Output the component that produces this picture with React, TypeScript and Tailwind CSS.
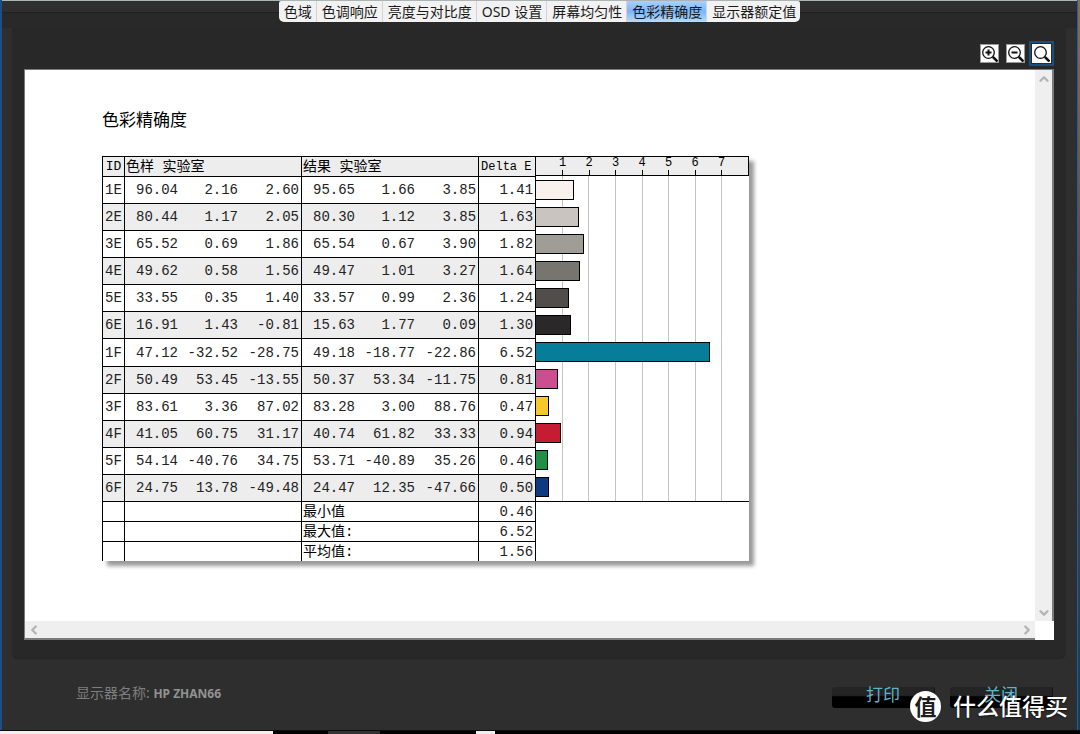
import { ChevronDown, ChevronLeft, ChevronRight, ChevronUp } from "lucide-react";
import clsx from "clsx";

type Sample = {
  id: string;
  target: string[];
  result: string[];
  deltaE: number;
  color: string;
};

const tabs = [
  "色域",
  "色调响应",
  "亮度与对比度",
  "OSD 设置",
  "屏幕均匀性",
  "色彩精确度",
  "显示器额定值",
];

const samples: Sample[] = [
  { id: "1E", target: ["96.04", "2.16", "2.60"], result: ["95.65", "1.66", "3.85"], deltaE: 1.41, color: "#f9f1ed" },
  { id: "2E", target: ["80.44", "1.17", "2.05"], result: ["80.30", "1.12", "3.85"], deltaE: 1.63, color: "#c9c4bf" },
  { id: "3E", target: ["65.52", "0.69", "1.86"], result: ["65.54", "0.67", "3.90"], deltaE: 1.82, color: "#a09d97" },
  { id: "4E", target: ["49.62", "0.58", "1.56"], result: ["49.47", "1.01", "3.27"], deltaE: 1.64, color: "#777570" },
  { id: "5E", target: ["33.55", "0.35", "1.40"], result: ["33.57", "0.99", "2.36"], deltaE: 1.24, color: "#504d4b" },
  { id: "6E", target: ["16.91", "1.43", "-0.81"], result: ["15.63", "1.77", "0.09"], deltaE: 1.3, color: "#2a2829" },
  { id: "1F", target: ["47.12", "-32.52", "-28.75"], result: ["49.18", "-18.77", "-22.86"], deltaE: 6.52, color: "#067e9a" },
  { id: "2F", target: ["50.49", "53.45", "-13.55"], result: ["50.37", "53.34", "-11.75"], deltaE: 0.81, color: "#cb4f8e" },
  { id: "3F", target: ["83.61", "3.36", "87.02"], result: ["83.28", "3.00", "88.76"], deltaE: 0.47, color: "#f6c92b" },
  { id: "4F", target: ["41.05", "60.75", "31.17"], result: ["40.74", "61.82", "33.33"], deltaE: 0.94, color: "#c61c33" },
  { id: "5F", target: ["54.14", "-40.76", "34.75"], result: ["53.71", "-40.89", "35.26"], deltaE: 0.46, color: "#228f47" },
  { id: "6F", target: ["24.75", "13.78", "-49.48"], result: ["24.47", "12.35", "-47.66"], deltaE: 0.5, color: "#0f3a82" },
];

const summary = [
  { label: "最小值", value: "0.46" },
  { label: "最大值:", value: "6.52" },
  { label: "平均值:", value: "1.56" },
];

const ticks = [1, 2, 3, 4, 5, 6, 7];
const SCALE_MAX = 8;

const ZoomIcon = ({ sign }: { sign?: "+" | "-" }) => (
  <svg viewBox="0 0 17 17" className="size-[17px]" fill="none" stroke="#111">
    <circle cx="7.5" cy="7.5" r="5.8" strokeWidth="1.3" />
    <path d="M11.8 11.8 L16.5 16.5" strokeWidth="2.6" />
    {sign && <path d="M4.5 7.5 H10.5" strokeWidth="2" />}
    {sign === "+" && <path d="M7.5 4.5 V10.5" strokeWidth="2" />}
  </svg>
);

const Tabs = () => (
  <header className="flex h-7 items-start justify-center border-t border-[#aab4b4] bg-[linear-gradient(#2f2f2f_11px,#202020_11px,#202020_12px,#292929_12px)]">
    <div role="tablist" className="flex h-[21px] overflow-hidden rounded-b-[5px] rounded-t-[2px] bg-[#f2f2f2]">
      {tabs.map((tab) => (
        <button
          key={tab}
          role="tab"
          aria-selected={tab === "色彩精确度"}
          className={clsx(
            "border-r border-[#d4d4d4] pr-1 pl-[5px] text-sm leading-[18px] whitespace-nowrap text-[#1a1a1a] last:border-r-0",
            tab === "色彩精确度" && "bg-linear-to-b from-[#a9d0fb] via-[#7ab6f7] to-[#b4dcff]"
          )}
        >
          {tab}
        </button>
      ))}
    </div>
  </header>
);

const NumberCells = ({ values }: { values: string[] }) => (
  <>
    {values.map((value, i) => (
      <td key={i} className={clsx("border-t border-black pr-[2px] text-right", i === 0 && "border-l")}>
        {value}
      </td>
    ))}
  </>
);

const ReportTable = () => (
  <table className="h-[405px] w-[647px] table-fixed border-separate border-spacing-0 bg-white font-['Liberation_Mono','Noto_Sans_CJK_SC',monospace] text-sm leading-5 text-[#222] shadow-[5px_5px_4px_rgba(0,0,0,0.4)]">
    <colgroup>
      <col className="w-[22px]" />
      <col className="w-[56px]" />
      <col className="w-[60px]" />
      <col className="w-[61px]" />
      <col className="w-[56px]" />
      <col className="w-[60px]" />
      <col className="w-[61px]" />
      <col className="w-[57px]" />
      <col />
    </colgroup>
    <thead>
      <tr className="h-5 bg-[#ededed] text-left text-sm leading-[18px] text-black *:border-t *:border-l *:border-black *:font-normal">
        <th className="text-center text-[13px]">ID</th>
        <th colSpan={3} className="pl-px">色样 实验室</th>
        <th colSpan={3} className="pl-px">结果 实验室</th>
        <th className="pl-[2px] text-xs whitespace-nowrap">Delta E</th>
        <th className="border-r border-b p-0">
          <div className="grid grid-cols-16 text-center text-xs leading-[13px]">
            {ticks.map((tick) => (
              <span key={tick} className="col-span-2 flex flex-col items-center first:col-start-2">
                {tick}
                <span className="h-[5px] w-px bg-black" />
              </span>
            ))}
          </div>
        </th>
      </tr>
    </thead>
    <tbody>
      {samples.map((sample) => (
        <tr key={sample.id} className="even:bg-[#ededed]">
          <td className="border-t border-l border-black text-center">{sample.id}</td>
          <NumberCells values={sample.target} />
          <NumberCells values={sample.result} />
          <td className="border-t border-l border-black pr-[2px] text-right">{sample.deltaE.toFixed(2)}</td>
          <td className="relative border-l border-black bg-white p-0">
            <div className="absolute inset-0 grid grid-cols-8">
              {ticks.map((tick) => (
                <span key={tick} className="border-r border-[#c4c4c4]" />
              ))}
            </div>
            <div
              className="relative h-5 border border-l-0 border-black"
              style={{ width: `${(sample.deltaE / SCALE_MAX) * 100}%`, backgroundColor: sample.color }}
            />
          </td>
        </tr>
      ))}
    </tbody>
    <tfoot>
      {summary.map((row, i) => (
        <tr key={row.label} className="h-5 leading-[18px] *:border-t *:border-l *:border-black">
          <td />
          <td colSpan={3} />
          <th colSpan={3} className="pl-px text-left text-sm leading-[18px] font-normal text-black">{row.label}</th>
          <td className="pr-[2px] text-right">{row.value}</td>
          {i === 0 && <td rowSpan={3} />}
        </tr>
      ))}
    </tfoot>
  </table>
);

const iconButton = "flex size-[19px] items-center justify-center border border-[#9a9a9a] bg-white";
const scrollButton = "flex size-[17px] items-center justify-center text-[#b4b4b4]";
const footerButton =
  "flex h-[21px] w-[103px] items-start justify-center rounded-[3px] border-r border-[#111] bg-linear-to-b from-[#242424] from-40% to-black to-50% text-[17px] leading-4 text-[#5fb3cc]";

const App = () => {
  return (
    <div className="flex min-h-screen flex-col bg-[#2e2e2e] font-['Noto_Sans','Noto_Sans_CJK_SC',sans-serif]">
      <div className="flex flex-1">
        <div className="w-[2px] bg-[#1b4f86]" />
        <div className="flex min-w-0 flex-1 flex-col">
          <Tabs />
          <main className="mr-[11px] ml-[10px] flex flex-1 flex-col rounded-b-md border-b border-[#242424] bg-[#282828] px-3 pt-[13px] pb-[18px]">
            <div className="mb-1 flex h-6 items-center justify-end gap-[7px]">
              <button aria-label="放大" className={iconButton}>
                <ZoomIcon sign="+" />
              </button>
              <button aria-label="缩小" className={iconButton}>
                <ZoomIcon sign="-" />
              </button>
              <button aria-label="适合窗口" className="-ml-[3px] border-2 border-[#1d4f7c] p-px">
                <span className="flex size-[19px] items-center justify-center bg-white">
                  <ZoomIcon />
                </span>
              </button>
            </div>

            <div className="grid flex-1 grid-cols-[1fr_17px] grid-rows-[1fr_17px] border border-r-2 border-b-2 border-[#7b7b7b] bg-white">
              <section className="overflow-hidden pt-[38px] pb-10 pl-[77px]">
                <h1 className="mb-6 text-[17px] leading-6 text-black">色彩精确度</h1>
                <ReportTable />
              </section>
              <div className="flex flex-col justify-between bg-[#efefef]">
                <button aria-label="向上滚动" className={scrollButton}>
                  <ChevronUp size={14} strokeWidth={4} />
                </button>
                <button aria-label="向下滚动" className={scrollButton}>
                  <ChevronDown size={14} strokeWidth={4} />
                </button>
              </div>
              <div className="flex justify-between bg-[#efefef]">
                <button aria-label="向左滚动" className={scrollButton}>
                  <ChevronLeft size={14} strokeWidth={4} />
                </button>
                <button aria-label="向右滚动" className={scrollButton}>
                  <ChevronRight size={14} strokeWidth={4} />
                </button>
              </div>
              <div className="-mr-[2px] -mb-[2px] bg-white" />
            </div>
          </main>

          <footer className="relative flex h-[71px] items-start justify-between pt-6 pr-6 pl-[74px]">
            <p className="text-sm leading-5 text-[#7e7e7e]">
              显示器名称: <span className="text-xs font-bold text-[#929292]">HP ZHAN66</span>
            </p>
            <div className="mt-1 flex gap-[15px]">
              <button className={footerButton}>打印</button>
              <button className={footerButton}>关闭</button>
            </div>
            <div className="absolute right-[9px] bottom-2 flex items-center gap-3 text-white">
              <span className="flex size-[31px] items-center justify-center rounded-full bg-white text-[22px] leading-none font-bold text-[#1c1c1c]">
                值
              </span>
              <span className="text-[23px] leading-8 font-medium [text-shadow:0_1px_2px_rgba(0,0,0,0.6)]">
                什么值得买
              </span>
            </div>
          </footer>
        </div>
        <div className="w-[3px] border-l border-[#1f5f9e] bg-linear-to-b from-[#8a6a5c] via-[#4a4048] to-[#123c55]" />
      </div>

      <div className="flex h-1 border-t border-[#0c0c0c] bg-black">
        <div className="w-[273px] bg-[#f6eeee]" />
        <div className="ml-[55px] w-[52px] bg-[#333]" />
        <div className="ml-24 w-[19px] bg-[#eee]" />
      </div>
    </div>
  );
};

export default App;
